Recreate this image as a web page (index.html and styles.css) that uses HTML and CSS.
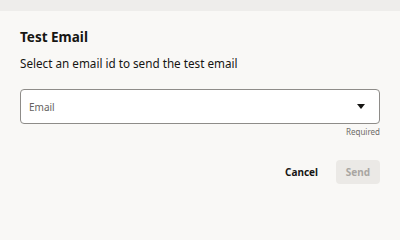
FILE: index.html
```html
<!DOCTYPE html>
<html>
<head>
<meta charset="utf-8">
<link rel="stylesheet" href="styles.css">
</head>
<body>
<div class="backdrop"></div>
<div class="dialog">
  <h1 class="title">Test Email</h1>
  <p class="subtitle">Select an email id to send the test email</p>
  <div class="field">
    <div class="select">
      <span class="placeholder">Email</span>
      <svg class="arrow" width="8" height="5" viewBox="0 0 8 5"><path d="M0 0H8L4 5Z" fill="#161513"/></svg>
    </div>
    <div class="help">Required</div>
  </div>
  <div class="actions">
    <button class="btn cancel">Cancel</button>
    <button class="btn send">Send</button>
  </div>
</div>
</body>
</html>
```
FILE: styles.css
```css
html, body {
  margin: 0;
  padding: 0;
  width: 400px;
  height: 205px;
  overflow: hidden;
  background: #f9f8f6;
  font-family: "Noto Sans", "Open Sans", sans-serif;
  color: #161513;
}
.backdrop {
  height: 11px;
  background: #eeedeb;
}
.dialog {
  padding: 16px 20px 0 20px;
}
.title {
  margin: 0;
  font-size: 13.5px;
  font-weight: 700;
  line-height: 20px;
}
.subtitle {
  margin: 8px 0 0 0;
  font-size: 11.7px;
  line-height: 16px;
  color: #161513;
}
.field {
  margin-top: 18px;
}
.select {
  height: 33px;
  border: 1px solid #8e8c89;
  border-radius: 4px;
  background: #fff;
  display: flex;
  align-items: center;
  justify-content: space-between;
  padding: 0 14px 0 8px;
}
.placeholder {
  font-size: 10px;
  color: #65625f;
}
.arrow {
  display: block;
}
.help {
  text-align: right;
  font-size: 8px;
  line-height: 12px;
  margin-top: 2px;
  color: #6f6c69;
}
.actions {
  margin-top: 22px;
  display: flex;
  justify-content: flex-end;
  gap: 10px;
}
.btn {
  font-family: inherit;
  font-size: 10px;
  font-weight: 700;
  border: none;
  border-radius: 4px;
  height: 24px;
  padding: 0 8px;
  background: transparent;
  color: #161513;
}
.send {
  width: 44px;
  background: #ebe9e6;
  color: #a9a6a2;
}
```
